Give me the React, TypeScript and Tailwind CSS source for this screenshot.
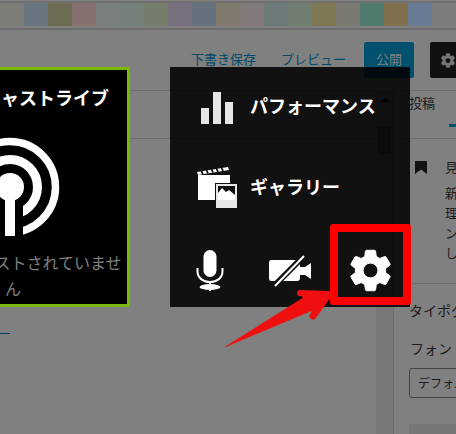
import React from "react";

const swatches = [
  "bg-[#7c7c78]", "bg-[#66757f]", "bg-[#6c6c53]", "bg-[#877070]", "bg-[#7b7f7d]", "bg-[#76807a]",
  "bg-[#767e6b]", "bg-[#78707f]", "bg-[#65727d]", "bg-[#7f7a6b]", "bg-[#827a7a]", "bg-[#6d7a7a]",
  "bg-[#727d72]", "bg-[#7e7855]", "bg-[#7a7a72]", "bg-[#4f7a6e]", "bg-[#80704e]", "bg-[#6a7a94]",
  "bg-[#7d7d7d]",
];

const gearPath =
  "M19.14 12.94c.04-.3.06-.61.06-.94 0-.32-.02-.64-.07-.94l2.03-1.58c.18-.14.23-.41.12-.61l-1.92-3.32c-.12-.22-.37-.29-.59-.22l-2.39.96c-.5-.38-1.03-.7-1.62-.94l-.36-2.54c-.04-.24-.24-.41-.48-.41h-3.84c-.24 0-.43.17-.47.41l-.36 2.54c-.59.24-1.13.57-1.62.94l-2.39-.96c-.22-.08-.47 0-.59.22L2.74 8.87c-.12.21-.08.47.12.61l2.03 1.58c-.05.3-.09.63-.09.94s.02.64.07.94l-2.03 1.58c-.18.14-.23.41-.12.61l1.92 3.32c.12.22.37.29.59.22l2.39-.96c.5.38 1.03.7 1.62.94l.36 2.54c.05.24.24.41.48.41h3.84c.24 0 .44-.17.47-.41l.36-2.54c.59-.24 1.13-.56 1.62-.94l2.39.96c.22.08.47 0 .59-.22l1.92-3.32c.12-.22.07-.47-.12-.61l-2.01-1.58zM12 15.5a3.5 3.5 0 1 1 0-7 3.5 3.5 0 0 1 0 7z";

function Gear({ className }: { className: string }) {
  return (
    <svg
      viewBox="2.4 1.8 19.2 20.4"
      className={className}
      fill="currentColor"
      fillRule="evenodd"
      stroke="currentColor"
      strokeWidth="0.45"
      strokeLinejoin="round"
    >
      <path d={gearPath} />
    </svg>
  );
}

function Bars() {
  return (
    <svg width="32" height="32" viewBox="0 0 32 32" fill="#e6e6e6">
      <rect x="0" y="16" width="8" height="16" />
      <rect x="12" y="0" width="8" height="32" />
      <rect x="24" y="10" width="8" height="22" />
    </svg>
  );
}

function Gallery() {
  return (
    <svg width="41" height="42" viewBox="0 0 41 42">
      <rect x="1" y="9" width="32" height="25" fill="#fff" />
      <path d="M0 6 L31 1 L32 4 L1 9 Z" fill="#fff" />
      <g stroke="#111" strokeWidth="1.8">
        <path d="M6 8.5 L4 4" />
        <path d="M11 7.5 L9 3" />
        <path d="M16 6.5 L14 2" />
        <path d="M21 6 L19 1.5" />
        <path d="M26 5 L24 0.5" />
      </g>
      <rect x="18" y="17" width="23" height="25" fill="#111" />
      <rect x="19" y="18" width="21" height="24" fill="#e8e8e8" />
      <rect x="21" y="20" width="17" height="14" fill="#111" />
      <path d="M21 34 V27 L25 22 L29 26 L32 24 L38 29 V34 Z" fill="#fff" />
    </svg>
  );
}

function Mic() {
  return (
    <svg width="28" height="42" viewBox="0 0 28 42">
      <rect x="7.5" y="0" width="13" height="27" rx="6.5" fill="#fff" />
      <path d="M1.5 18 V21 C1.5 28 7 32 14 32 C21 32 26.5 28 26.5 21 V18" fill="none" stroke="#fff" strokeWidth="2" />
      <rect x="13" y="32" width="2" height="3" fill="#fff" />
      <ellipse cx="14" cy="37" rx="10.5" ry="3" fill="#fff" />
      <rect x="13" y="39" width="2" height="2" fill="#fff" />
    </svg>
  );
}

function Camera() {
  return (
    <svg width="43" height="32" viewBox="0 0 43 32" className="ml-[1px]">
      <path d="M2 5 H28 Q31 5 31 8 V23 Q31 26 28 26 H2 Q0 26 0 23 V8 Q0 5 2 5 Z" fill="#fff" />
      <path d="M31 12 L36 12 L42 8 V24 L36 20 L31 20 Z" fill="#fff" />
      <path d="M4 32 L35 1" stroke="#111" strokeWidth="6" />
      <path d="M6 31 L35 1" stroke="#fff" strokeWidth="2" />
    </svg>
  );
}

export default function App() {
  return (
    <div
      className="relative w-[456px] h-[434px] overflow-hidden bg-[#808080]"
      style={{ fontFamily: '"Noto Sans CJK JP", "Noto Sans", sans-serif' }}
    >
      {/* swatch strip */}
      <div className="pt-px">
        <div className="h-[2px] bg-[#707070]" />
        <div className="flex h-[23px]">
          {swatches.map((c, i) => (
            <div key={i} className={"w-[24px] shrink-0 " + c} />
          ))}
        </div>
        <div className="mt-[2px] h-[2px] bg-[#6c6c6c]" />
      </div>

      {/* toolbar */}
      <div className="flex h-[61px] items-center border-b border-[#6e6e6e] pl-[191px] text-[13px] text-[#004a68]">
        <span className="mb-[2px] w-[65px] whitespace-nowrap">下書き保存</span>
        <span className="mb-[2px] ml-[25px] w-[64px] whitespace-nowrap">プレビュー</span>
        <div className="ml-[19px] flex h-[36px] w-[50px] shrink-0 items-center justify-center rounded-[2px] bg-[#00506e] pb-[2px] text-[#808080]">
          公開
        </div>
        <div className="ml-[16px] flex h-[36px] w-[40px] shrink-0 items-center rounded-[2px] bg-[#111111] pl-[11px] text-[#777777]">
          <Gear className="h-[15px] w-[14px]" />
        </div>
      </div>

      {/* body */}
      <div className="flex h-[343px]">
        <div className="w-[376px] shrink-0">
          <div className="h-[48px] border-b border-[#6e6e6e]" />
          <div className="mt-[194px] h-px w-[10px] bg-[#004060]" />
        </div>
        <div className="flex w-[17px] shrink-0 flex-col items-center bg-[#787878]">
          <div className="mt-[7px] h-0 w-0 border-x-[4px] border-b-[4px] border-x-transparent border-b-black" />
          <div className="mt-[25px] h-[27px] w-[13px] bg-[#505050]" />
        </div>
        <div className="min-w-0 flex-1 overflow-hidden border-l border-[#6e6e6e] text-[13px] text-[#1c1c1c]">
          <div className="relative h-[48px] border-b border-[#6e6e6e] pl-[15px] pt-[2px] whitespace-nowrap">
            投稿
            <div className="absolute bottom-[11px] left-[55px] h-[3px] w-[10px] bg-[#00506e]" />
          </div>
          <div className="flex h-[145px] border-b border-[#6e6e6e] pl-[21px] pt-[21px]">
            <svg width="12" height="13" viewBox="0 0 12 13" className="mt-[1px] shrink-0" fill="#111">
              <path d="M0 0 H12 V13 L6 8.5 L0 13 Z" />
            </svg>
            <div className="ml-[18px] w-[60px] shrink-0 leading-[20px] whitespace-nowrap">
              <div className="-mt-[3px] mb-[6px]">見出しの</div>
              <div>新しい</div>
              <div>理解</div>
              <div>ンテンツ</div>
              <div>します</div>
            </div>
          </div>
          <div className="pl-[15px] pt-[16px] text-[14px] leading-[20px] whitespace-nowrap">タイポグラフィ</div>
          <div className="pl-[16px] pt-[18px] text-[14px] leading-[20px] whitespace-nowrap">フォント</div>
          <div className="ml-[15px] mt-[10px] flex h-[30px] w-[90px] items-center rounded-[3px] border border-[#444444] pl-[8px] text-[12px] whitespace-nowrap">
            デフォルト
          </div>
          <div className="ml-[15px] mt-[26px] h-[20px] w-[90px] rounded-[3px] bg-[#777777]" />
        </div>
      </div>

      {/* left card */}
      <div className="absolute left-[-104px] top-[67px] flex h-[240px] w-[234px] flex-col items-center overflow-hidden border-[3px] border-[#7ab800] bg-black">
        <div className="mt-[13px] pl-[12px] text-[18px] font-bold leading-[28px] whitespace-nowrap text-white">
          ポッドキャストライブ
        </div>
        <svg width="100" height="104" viewBox="-50 -52 100 104" className="mr-[6px] mt-[24px] shrink-0">
          <circle cx="0" cy="0" r="45.5" fill="none" stroke="#fff" strokeWidth="7.5" />
          <circle cx="0" cy="0" r="27.5" fill="none" stroke="#fff" strokeWidth="9" />
          <rect x="-13" y="13" width="26" height="40" fill="#000" />
          <circle cx="0" cy="0" r="14" fill="#fff" />
          <rect x="-5" y="0" width="10" height="49" fill="#fff" />
        </svg>
        <div className="mt-[10px] w-[228px] text-center text-[16px] leading-[26px] text-[#808080]">
          <div className="pl-[10px] whitespace-nowrap">ポッドキャストされていませ</div>
          <div>ん</div>
        </div>
      </div>

      {/* popup panel */}
      <div className="absolute left-[170px] top-[67px] flex h-[240px] w-[240px] flex-col bg-black/[0.87] text-[18px] font-bold text-white">
        <div className="flex h-[80px] items-center pl-[31px]">
          <div className="mt-[1px]"><Bars /></div>
          <span className="mb-[4px] ml-[17px] whitespace-nowrap">パフォーマンス</span>
        </div>
        <div className="flex h-[80px] items-center pl-[27px]">
          <Gallery />
          <span className="mb-[2px] ml-[12px] whitespace-nowrap">ギャラリー</span>
        </div>
        <div className="grid h-[80px] grid-cols-3">
          <div className="flex items-center justify-center pt-[7px]"><Mic /></div>
          <div className="flex items-center justify-center pt-[7px]"><Camera /></div>
          <div className="flex items-center justify-center pt-[7px] text-white">
            <Gear className="h-[43px] w-[41px]" />
          </div>
        </div>
        {/* highlight box */}
        <div className="absolute left-[160px] top-[157px] h-[81px] w-[81px] rounded-[3px] border-[8px] border-[#ff0000]" />
      </div>

      {/* arrow */}
      <svg className="absolute left-0 top-0" width="456" height="434" viewBox="0 0 456 434">
        <path d="M225 347 L306 296 L318 308 Z" fill="#f00f0f" stroke="#f00f0f" strokeWidth="0.5" />
        <path d="M328 294 L300 293" stroke="#f00f0f" strokeWidth="6" strokeLinecap="round" />
        <path d="M328 295 L313 316" stroke="#f00f0f" strokeWidth="7" strokeLinecap="round" />
        <path d="M300 293 L331 291 L314 316 Z" fill="#f00f0f" />
      </svg>
    </div>
  );
}
